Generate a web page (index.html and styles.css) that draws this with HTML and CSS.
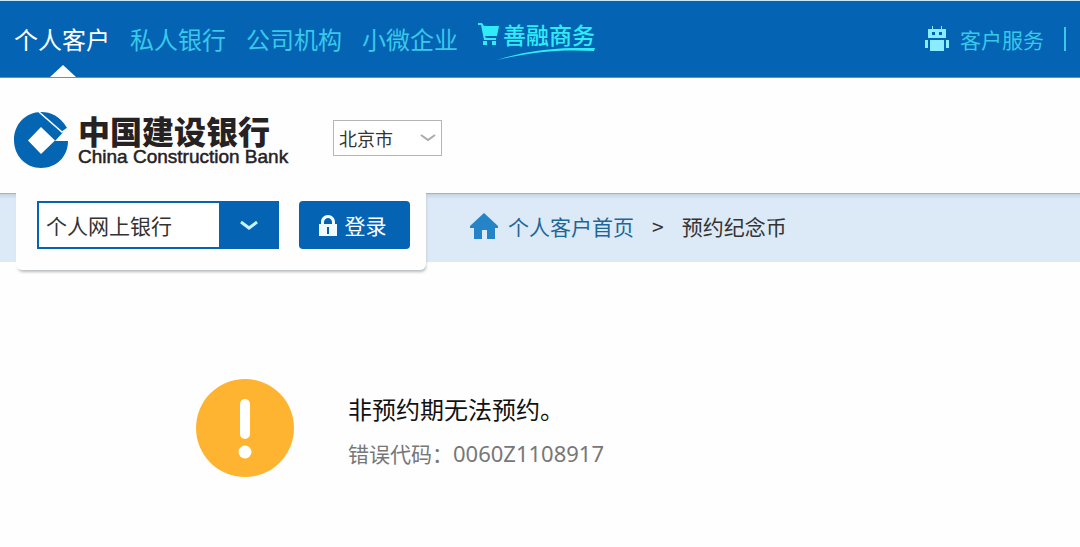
FILE: index.html
```html
<!DOCTYPE html>
<html lang="zh-CN">
<head>
<meta charset="utf-8">
<meta name="viewport" content="width=device-width, initial-scale=1">
<title>预约纪念币</title>
<link rel="stylesheet" href="styles.css">
</head>
<body>
<header class="topbar">
  <nav class="nav">
    <a class="nav-link nav-active" href="#">个人客户</a>
    <a class="nav-link" href="#">私人银行</a>
    <a class="nav-link" href="#">公司机构</a>
    <a class="nav-link" href="#">小微企业</a>
    <a class="mall" href="#">
      <svg class="mall-cart" viewBox="0 0 21 22" aria-hidden="true"><path d="M0 0h4l2 3h15l-2 10H7l1 2h10v2H6L3 2H0zM5 18h4v4H5zM14 18h4v4h-4z"/></svg>
      <span>善融商务</span>
      <svg class="mall-stroke" viewBox="0 0 98 12" aria-hidden="true"><path d="M0 12C28 3 58-1 98 0L97 3C62 1 34 4 0 12z"/></svg>
    </a>
  </nav>
  <a class="service" href="#">
    <svg class="robot" viewBox="0 0 24 26" aria-hidden="true"><path fill-rule="evenodd" d="M7 0h1v3h8V0h1v3h4v9H3V3h4zM7 6v3h3V6zM14 6v3h3V6zM5 14h14v11H5zM0 14h3v8H0zM21 14h3v8h-3z"/></svg>
    <span>客户服务</span>
  </a>
</header>

<div class="brandbar">
  <a class="brand" href="#">
    <svg class="brand-mark" viewBox="0 0 54 56" aria-hidden="true">
      <path d="M27 0C37 0 46 4 53 16L41 29H54C54 45 42 56 27 56S0 44 0 28S12 0 27 0z" fill="#0466b3"/>
      <path d="M27 15L41 28.500L27 42L14 28.500z" fill="#fff"/>
      <path d="M25 0L48 20L54 16" fill="none" stroke="#fff" stroke-width="1.500"/>
    </svg>
    <span class="brand-text">
      <span class="brand-cn">中国建设银行</span>
      <span class="brand-en">China Construction Bank</span>
    </span>
  </a>
  <div class="picker city">
    <select class="picker-select" aria-label="城市"><option>北京市</option></select>
    <svg class="picker-arrow" viewBox="0 0 16 8" aria-hidden="true"><path d="M1 1L8 6L15 1"/></svg>
  </div>
</div>

<div class="subbar">
  <form class="login">
    <div class="picker bank">
      <select class="picker-select" aria-label="登录渠道"><option>个人网上银行</option></select>
      <span class="bank-toggle"><svg class="picker-arrow" viewBox="0 0 18 10" aria-hidden="true"><path d="M1 2L9 8L17 2"/></svg></span>
    </div>
    <button class="login-button" type="button">
      <svg class="lock" viewBox="0 0 18 21" aria-hidden="true"><path fill-rule="evenodd" d="M0 9h2V7C2 3 5 0 9 0s7 3 7 7v2h2v12H0zM5 9h8V7c0-2-2-4-4-4S5 5 5 7zM8 12v7h2v-7z"/></svg>
      <span>登录</span>
    </button>
  </form>
  <nav class="crumbs" aria-label="当前位置">
    <a class="crumb-home" href="#">
      <svg class="home" viewBox="0 0 28 26" aria-hidden="true"><path d="M14 0L28 13V15H25V26H17V17H12V26H4V15H0V13z"/></svg>
      <span>个人客户首页</span>
    </a>
    <span class="crumb-sep">&gt;</span>
    <span>预约纪念币</span>
  </nav>
</div>

<main class="notice">
  <svg class="notice-icon" viewBox="0 0 98 98" aria-hidden="true">
    <circle cx="49" cy="49" r="49" fill="#ffb431"/>
    <rect x="44" y="20" width="10" height="40" rx="5" fill="#fff"/>
    <circle cx="49" cy="73" r="6.500" fill="#fff"/>
  </svg>
  <div class="notice-text">
    <h1 class="notice-title">非预约期无法预约。</h1>
    <p class="notice-detail">错误代码：<span class="notice-code">0060Z1108917</span></p>
  </div>
</main>
</body>
</html>
```
FILE: styles.css
```css
* {
  box-sizing: border-box;
}

body {
  margin: 0;
  background: #fefefe;
  color: #333;
  font-family: "Noto Sans CJK SC", sans-serif;
  font-size: 21px;
  line-height: 32px;
}

a {
  color: inherit;
  text-decoration: none;
}

svg {
  display: block;
  flex: none;
}

select,
button {
  font: inherit;
}

.topbar {
  display: flex;
  justify-content: space-between;
  height: 78px;
  padding: 0 14px;
  border-top: 1px solid #c4e8f4;
  border-bottom: 1px solid #5b93bd;
  background: #0464b3;
  color: #38c8ea;
}

.nav {
  display: flex;
  align-items: center;
  gap: 20px;
  font-size: 24px;
  white-space: nowrap;
}

.nav-link {
  display: flex;
  align-items: center;
  align-self: stretch;
}

.nav-active {
  position: relative;
  color: #fff;
}

.nav-active::after {
  content: "";
  position: absolute;
  bottom: 0;
  left: 50%;
  margin-left: -12px;
  border: 13px solid transparent;
  border-top: 0;
  border-bottom: 12px solid #fff;
}

.mall {
  position: relative;
  display: flex;
  align-items: center;
  gap: 4px;
  padding-bottom: 10px;
  color: #30ecf8;
  font-size: 23px;
  font-weight: 500;
}

.mall-cart {
  width: 21px;
  height: 22px;
  fill: #30ecf8;
}

.mall-stroke {
  position: absolute;
  right: 0;
  bottom: 0;
  width: 98px;
  height: 12px;
  fill: #30ecf8;
}

.service {
  display: flex;
  align-items: center;
  align-self: center;
  gap: 11px;
  height: 24px;
  padding-right: 20px;
  border-right: 2px solid #38c8ea;
  white-space: nowrap;
}

.robot {
  width: 24px;
  height: 26px;
  fill: #8cecff;
}

.brandbar {
  display: flex;
  align-items: center;
  gap: 15px;
  height: 115px;
  padding: 8px 14px 0;
}

.brand {
  display: flex;
  align-items: center;
  gap: 10px;
  color: #262223;
}

.brand-mark {
  width: 54px;
  height: 56px;
}

.brand-text {
  display: flex;
  flex-direction: column;
  min-width: 240px;
  white-space: nowrap;
}

.brand-cn {
  font-size: 32px;
  font-weight: 900;
  line-height: 34px;
}

.brand-en {
  font-family: "Liberation Sans", sans-serif;
  font-size: 19px;
  line-height: 20px;
  -webkit-text-stroke: 0.5px #262223;
}

.picker {
  position: relative;
  display: flex;
}

.picker-select {
  width: 100%;
  margin: 0;
  border: 1px solid #b5b5b5;
  border-radius: 0;
  background: #fff;
  color: #333;
  appearance: none;
}

.picker-arrow {
  fill: none;
  stroke: #aaa;
  stroke-width: 2;
}

.city {
  width: 109px;
  height: 36px;
  margin-bottom: 4px;
}

.city .picker-select {
  padding: 0 5px;
  font-size: 18px;
}

.city .picker-arrow {
  position: absolute;
  top: 14px;
  right: 6px;
  width: 16px;
  height: 8px;
  pointer-events: none;
}

.subbar {
  display: flex;
  height: 69px;
  padding-left: 16px;
  border-top: 1px solid #a9b1ba;
  background: linear-gradient(#c5d3e0, #dce9f6 5px);
}

.login {
  display: flex;
  align-items: center;
  gap: 20px;
  width: 410px;
  height: 80px;
  margin-top: -4px;
  padding: 0 16px 10px 21px;
  border-radius: 0 0 6px 6px;
  background: #fefefe;
  box-shadow: 1px 3px 3px -1px #b8bcc0;
}

.bank {
  flex: 1;
  height: 48px;
}

.bank .picker-select {
  padding: 0 68px 0 7px;
  border: 2px solid #0464b3;
}

.bank-toggle {
  position: absolute;
  inset: 0 0 0 auto;
  display: grid;
  place-items: center;
  width: 60px;
  background: #0464b3;
  pointer-events: none;
}

.bank .picker-arrow {
  width: 18px;
  height: 10px;
  stroke: #c9f3ff;
  stroke-width: 3;
}

.login-button {
  display: flex;
  align-items: center;
  justify-content: center;
  gap: 8px;
  width: 111px;
  height: 48px;
  padding: 0 4px 0 0;
  border: 0;
  border-radius: 4px;
  background: #0464b3;
  color: #fff;
}

.lock {
  width: 18px;
  height: 21px;
  fill: #f2fcff;
}

.crumbs {
  display: flex;
  align-items: center;
  gap: 18px;
  margin-left: 44px;
  padding-bottom: 4px;
  white-space: nowrap;
}

.crumb-home {
  display: flex;
  align-items: center;
  gap: 10px;
  color: #1d6798;
}

.home {
  width: 28px;
  height: 26px;
  fill: #2584c7;
}

.notice {
  display: flex;
  align-items: center;
  gap: 54px;
  padding: 117px 20px 40px 196px;
}

.notice-icon {
  width: 98px;
  height: 98px;
}

.notice-text {
  padding-top: 3px;
}

.notice-title {
  margin: 0;
  color: #111;
  font-size: 24px;
  font-weight: 400;
  line-height: 36px;
}

.notice-detail {
  margin: 10px 0 0;
  color: #777;
}

.notice-code {
  font-family: "Noto Sans", sans-serif;
  font-size: 22px;
}
```
